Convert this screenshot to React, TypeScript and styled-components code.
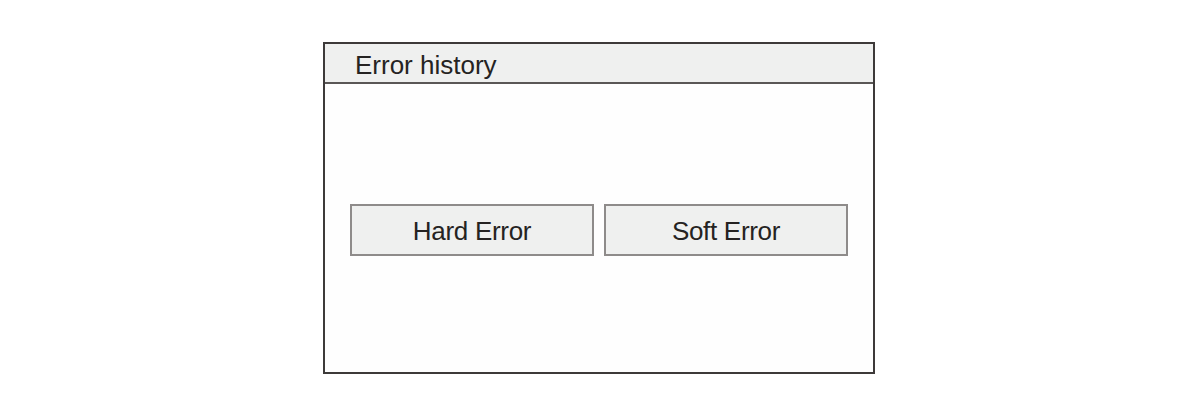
import styled, { createGlobalStyle } from "styled-components";

const GlobalStyle = createGlobalStyle`
    html, body {
        margin: 0;
        padding: 0;
        background: #ffffff;
        font-family: "Liberation Sans", Arial, sans-serif;
    }
`;

const Page = styled.div`
    width: 1200px;
    height: 414px;
    padding: 42px 0 0 323px;
    box-sizing: border-box;
`;

const Panel = styled.div`
    width: 552px;
    height: 332px;
    box-sizing: border-box;
    border: 2px solid #3d3a39;
    display: flex;
    flex-direction: column;
    background: #fefefe;
`;

const PanelHeader = styled.div`
    height: 40px;
    flex-shrink: 0;
    box-sizing: border-box;
    display: flex;
    align-items: center;
    padding: 3px 0 0 30px;
    background: #eff0ef;
    border-bottom: 2px solid #5a5756;
`;

const Title = styled.span`
    font-size: 26px;
    color: #252322;
    line-height: 1;
`;

const PanelBody = styled.div`
    flex: 1;
    display: flex;
    align-items: center;
    gap: 10px;
    padding: 3px 25px 0 25px;
`;

const ErrorButton = styled.button`
    flex: 1;
    height: 52px;
    box-sizing: border-box;
    border: 2px solid #8e8b8a;
    background: #eff0ef;
    font-family: "Liberation Sans", Arial, sans-serif;
    font-size: 26px;
    letter-spacing: -0.3px;
    color: #252322;
    padding: 3px 0 0;
    cursor: pointer;
`;

export default function App() {
    return (
        <>
            <GlobalStyle />
            <Page>
                <Panel>
                    <PanelHeader>
                        <Title>Error history</Title>
                    </PanelHeader>
                    <PanelBody>
                        <ErrorButton>Hard Error</ErrorButton>
                        <ErrorButton>Soft Error</ErrorButton>
                    </PanelBody>
                </Panel>
            </Page>
        </>
    );
}
